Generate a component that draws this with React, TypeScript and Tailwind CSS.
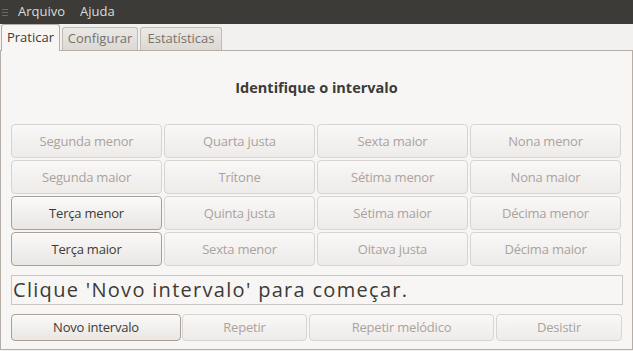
import React from "react";

const rows: [string, boolean][][] = [
  [["Segunda menor", false], ["Quarta justa", false], ["Sexta maior", false], ["Nona menor", false]],
  [["Segunda maior", false], ["Trítone", false], ["Sétima menor", false], ["Nona maior", false]],
  [["Terça menor", true], ["Quinta justa", false], ["Sétima maior", false], ["Décima menor", false]],
  [["Terça maior", true], ["Sexta menor", false], ["Oitava justa", false], ["Décima maior", false]],
];

function Btn({ label, on, className }: { label: string; on: boolean; className: string }) {
  return (
    <div
      className={
        "flex items-center justify-center rounded-[4px] border text-[13px] tracking-[-0.2px] pt-[1px] " +
        (on
          ? "border-[#a8a098] bg-gradient-to-b from-[#fbfaf9] to-[#e9e6e3] text-[#3c3b37] shadow-[inset_0_1px_0_#ffffff]"
          : "border-[#d9d4cf] bg-gradient-to-b from-[#f9f8f7] to-[#eeebe9] text-[#aba29d]") +
        " " +
        className
      }
    >
      {label}
    </div>
  );
}

export default function App() {
  return (
    <div
      className="w-[633px] h-[351px] bg-[#f2f1f0] flex flex-col overflow-hidden"
      style={{ fontFamily: '"Open Sans", "DejaVu Sans", sans-serif' }}
    >
      <div className="h-[24px] bg-[#3c3b37] flex items-center text-[13px] text-[#dfdbd2] shrink-0">
        <div className="ml-[2px] w-[6px] flex flex-col gap-[2px]">
          <div className="h-[1px] bg-[#6a6862]" />
          <div className="h-[1px] bg-[#6a6862]" />
          <div className="h-[1px] bg-[#6a6862]" />
        </div>
        <span className="ml-[10px]">Arquivo</span>
        <span className="ml-[15px]">Ajuda</span>
      </div>
      <div className="h-[26px] flex items-end pl-[1px] gap-[2px] shrink-0">
        <div className="h-[27px] w-[59px] -mb-[1px] rounded-t-[3px] border border-b-0 border-[#b6aea6] bg-[#f7f6f5] flex items-center justify-center text-[13px] text-[#3c3b37] relative z-10">
          Praticar
        </div>
        <div className="h-[23px] w-[76px] rounded-t-[3px] border border-b-0 border-[#c2bbb4] bg-gradient-to-b from-[#ebe9e6] to-[#dcd8d4] flex items-center justify-center text-[13px] text-[#77716b]">
          Configurar
        </div>
        <div className="h-[23px] w-[82px] rounded-t-[3px] border border-b-0 border-[#c2bbb4] bg-gradient-to-b from-[#ebe9e6] to-[#dcd8d4] flex items-center justify-center text-[13px] text-[#77716b]">
          Estatísticas
        </div>
      </div>
      <div className="h-[300px] w-[633px] border border-[#b6aea6] bg-[#f7f6f5] flex flex-col shrink-0 px-[10px]">
        <div className="mt-[27px] h-[20px] flex items-center justify-center text-[14.5px] font-bold text-[#3c3b37]">
          Identifique o intervalo
        </div>
        <div className="mt-[26px] grid grid-cols-[repeat(4,151px)] gap-x-[2px] gap-y-[2px]">
          {rows.map((r, i) =>
            r.map(([l, on], j) => <Btn key={i + "-" + j} label={l} on={on} className="h-[34px]" />)
          )}
        </div>
        <div className="mt-[9px] h-[30px] w-[612px] border border-[#cdc7c1] bg-[#f7f6f5] flex items-center pl-[1px] text-[20px] tracking-[1.3px] text-[#3c3b37] leading-none">
          Clique 'Novo intervalo' para começar.
        </div>
        <div className="mt-[9px] flex">
          <Btn label="Novo intervalo" on={true} className="h-[27px] w-[170px]" />
          <Btn label="Repetir" on={false} className="h-[27px] w-[125px] ml-[1px]" />
          <Btn label="Repetir melódico" on={false} className="h-[27px] w-[185px] ml-[2px]" />
          <Btn label="Desistir" on={false} className="h-[27px] w-[126px] ml-[2px]" />
        </div>
      </div>
    </div>
  );
}
